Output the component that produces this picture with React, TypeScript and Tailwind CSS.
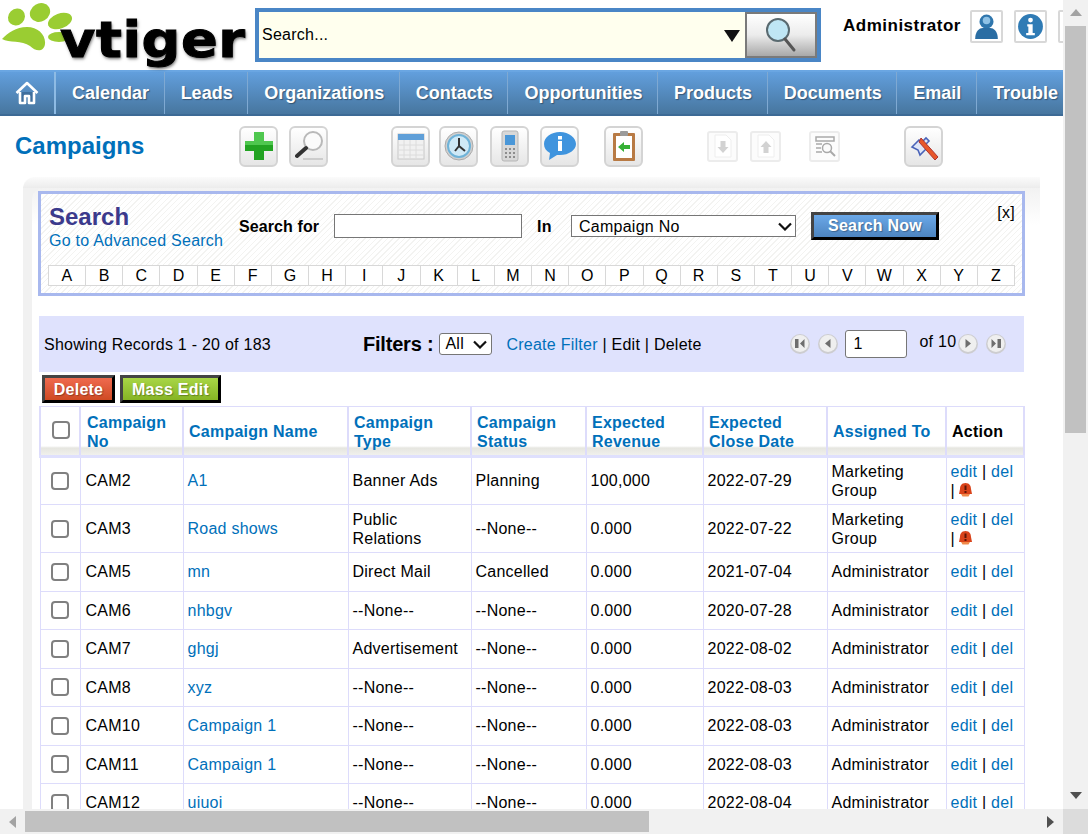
import React from 'react';

const navItems = ['Calendar', 'Leads', 'Organizations', 'Contacts', 'Opportunities', 'Products', 'Documents', 'Email', 'Trouble'];
const letters = 'ABCDEFGHIJKLMNOPQRSTUVWXYZ'.split('');

const rows = [
  ['CAM2', 'A1', 'Banner Ads', 'Planning', '100,000', '2022-07-29', 'Marketing Group', true],
  ['CAM3', 'Road shows', 'Public Relations', '--None--', '0.000', '2022-07-22', 'Marketing Group', true],
  ['CAM5', 'mn', 'Direct Mail', 'Cancelled', '0.000', '2021-07-04', 'Administrator', false],
  ['CAM6', 'nhbgv', '--None--', '--None--', '0.000', '2020-07-28', 'Administrator', false],
  ['CAM7', 'ghgj', 'Advertisement', '--None--', '0.000', '2022-08-02', 'Administrator', false],
  ['CAM8', 'xyz', '--None--', '--None--', '0.000', '2022-08-03', 'Administrator', false],
  ['CAM10', 'Campaign 1', '--None--', '--None--', '0.000', '2022-08-03', 'Administrator', false],
  ['CAM11', 'Campaign 1', '--None--', '--None--', '0.000', '2022-08-03', 'Administrator', false],
  ['CAM12', 'uiuoi', '--None--', '--None--', '0.000', '2022-08-04', 'Administrator', false],
] as const;

const headers = [
  ['Campaign', 'No'],
  ['Campaign Name'],
  ['Campaign', 'Type'],
  ['Campaign', 'Status'],
  ['Expected', 'Revenue'],
  ['Expected', 'Close Date'],
  ['Assigned To'],
];

const Logo = () => (
  <div className="relative w-[255px] h-[70px] shrink-0">
    <svg className="absolute left-0 top-0 blur-[0.4px]" width="80" height="56" viewBox="0 0 80 56">
      <g fill="#9acd32">
        <ellipse cx="16.5" cy="17" rx="9" ry="8" transform="rotate(-45 16.5 17)" />
        <ellipse cx="40" cy="12.5" rx="10.5" ry="9" transform="rotate(-30 40 12.5)" />
        <ellipse cx="60" cy="21" rx="12.5" ry="7.5" transform="rotate(-20 60 21)" />
        <path d="M2 39 C8 33 16 27 27 27 C38 27 46 35 45 44 C44 52 36 52 30 46 C22 40 9 43 2 39Z" />
        <ellipse cx="59" cy="37" rx="11" ry="5" />
      </g>
    </svg>
    <span className="absolute left-[60px] top-[10px] origin-left scale-x-[1.085] text-[50px] leading-[60px] font-bold font-['DejaVu_Sans',sans-serif] tracking-[0.5px] text-black [-webkit-text-stroke:1px_black] [text-shadow:1px_2px_3px_rgba(0,0,0,0.55)]">
      vtiger
    </span>
  </div>
);

const HeaderIcon = ({ children }: { children: React.ReactNode }) => (
  <div className="w-[33px] h-[33px] shrink-0 border-2 border-[#d8d8d8] rounded-[2px] bg-white flex items-center justify-center">
    {children}
  </div>
);

const ToolBtn = ({ children, className = '' }: { children: React.ReactNode; className?: string }) => (
  <div className={`w-[39px] h-[41px] shrink-0 rounded-[6px] border-2 border-[#d4d4d4] bg-gradient-to-b from-white to-[#e6e6e6] flex items-center justify-center [&>svg]:blur-[0.4px] ${className}`}>
    {children}
  </div>
);

const FadedBtn = ({ children, className = '' }: { children: React.ReactNode; className?: string }) => (
  <div className={`w-[31px] h-[31px] shrink-0 rounded-[3px] border-2 border-[#ececec] bg-[#fcfcfc] flex items-center justify-center [&>svg]:blur-[0.3px] ${className}`}>
    {children}
  </div>
);

const PageBtn = ({ dir, className = '' }: { dir: 'first' | 'prev' | 'next' | 'last'; className?: string }) => (
  <svg className={`shrink-0 ${className}`} width="20" height="20" viewBox="0 0 20 20">
    <circle cx="10" cy="10" r="10" fill="#cdcdd0" />
    <circle cx="10" cy="9.5" r="8.5" fill="#efefef" />
    {dir === 'first' && <path d="M5 5h3.5v9H5zM10 9.5L14.5 5v9z" fill="#6e6e6e" />}
    {dir === 'prev' && <path d="M12.5 5v9l-5.5-4.5z" fill="#6e6e6e" />}
    {dir === 'next' && <path d="M7.5 5v9l5.5-4.5z" fill="#6e6e6e" />}
    {dir === 'last' && <path d="M5.5 5v9l4.5-4.5zM11.5 5H15v9h-3.5z" fill="#6e6e6e" />}
  </svg>
);

const AlertIcon = () => (
  <svg className="inline-block align-[-1px] ml-[3px]" width="15" height="15" viewBox="0 0 15 15">
    <path d="M7.5 1C3.5 1 2 4 2 7L1 12h13l-1-5c0-3-1.5-6-5.5-6Z" fill="#d9431a" />
    <path d="M3 12h9l-1.5 2.5h-6z" fill="#f08a4a" />
    <rect x="6.5" y="3.5" width="2" height="4.5" fill="#5c1606" />
    <rect x="6.5" y="9" width="2" height="2" fill="#5c1606" />
  </svg>
);

const Chevron = () => (
  <svg className="shrink-0" width="14" height="9" viewBox="0 0 14 9" fill="none" stroke="#111" strokeWidth="2.2">
    <path d="M1 1.5l6 6 6-6" />
  </svg>
);

const Check = () => (
  <input
    type="checkbox"
    className="block appearance-none w-[18px] h-[18px] bg-white border-2 border-[#808080] rounded-[4px]"
  />
);

export default function App() {
  return (
    <div className="w-[1088px] h-[834px] overflow-hidden flex flex-col bg-white font-['Liberation_Sans',Arial,sans-serif] text-[16px] tracking-[0.25px] text-black">
      <div className="flex h-[809px]">
        <div className="w-[1063px] overflow-hidden shrink-0">
          {/* Top header */}
          <div className="flex h-[70px]">
            <Logo />
            <div className="w-[566px] h-[54px] mt-2 shrink-0 border-4 border-[#4a86c6] bg-[#ffffee] flex items-center pl-[3px]">
              <span className="flex-1">Search...</span>
              <svg className="mr-[5px] mt-[2px]" width="16" height="12" viewBox="0 0 16 12">
                <path d="M0 0h16L8 12z" fill="#111" />
              </svg>
              <div className="w-[72px] h-[46px] border-2 border-[#7a7a7a] bg-gradient-to-b from-white via-[#ececec] to-[#a9a9a9] flex items-center justify-center">
                <svg width="32" height="38" viewBox="0 0 32 38">
                  <circle cx="13" cy="14" r="11" fill="#bfe6f4" stroke="#5a6a70" strokeWidth="2" />
                  <path d="M20 23l9 11" stroke="#555" strokeWidth="3" strokeLinecap="round" />
                </svg>
              </div>
            </div>
            <div className="flex pt-[10px] pl-[22px] gap-[11px]">
              <span className="font-bold text-[17px] leading-[20px] tracking-[0.5px] mr-[-2px] mt-[6px] whitespace-nowrap">Administrator</span>
              <HeaderIcon>
                <svg width="27" height="27" viewBox="0 0 25 25">
                  <circle cx="12.5" cy="8" r="6.5" fill="#2f76ad" />
                  <circle cx="12.5" cy="7" r="3.5" fill="#8fc2e6" />
                  <path d="M2 24c0-7 4-10 7-10h7c3 0 7 3 7 10z" fill="#2a6da3" />
                </svg>
              </HeaderIcon>
              <HeaderIcon>
                <svg width="27" height="27" viewBox="0 0 25 25">
                  <circle cx="12.5" cy="12.5" r="11.5" fill="#2f7bb5" />
                  <circle cx="12.5" cy="6.5" r="2.2" fill="#fff" />
                  <path d="M9.5 10.5h5v8h2v2h-8v-2h2v-6h-1z" fill="#fff" />
                </svg>
              </HeaderIcon>
              <HeaderIcon>
                <div className="w-2 h-2 bg-[#999]" />
              </HeaderIcon>
            </div>
          </div>

          {/* Nav bar */}
          <div className="flex h-[46px] border-t-2 border-[#6aa6e2] border-b-2 border-b-[#3d6a95] bg-gradient-to-b from-[#629fdd] to-[#47769f] text-white font-bold text-[18px] tracking-normal [text-shadow:1px_1px_1px_rgba(0,0,0,0.35)] whitespace-nowrap">
            <div className="w-[56px] shrink-0 flex items-center justify-center border-r-2 border-r-[#8ebbe4]">
              <svg width="24" height="26" viewBox="0 0 24 26" fill="none" stroke="#fff" strokeWidth="2.6" strokeLinejoin="round">
                <path d="M1.5 13L12 3l10.5 10" />
                <path d="M5 12v11h5v-7h4v7h5V12" fill="#3f6f9e" />
              </svg>
            </div>
            {navItems.map((n) => (
              <div key={n} className="pl-4 pr-[14.6px] flex items-center border-r border-r-[#7fa9d2] last:border-r-0">
                {n}
              </div>
            ))}
          </div>

          {/* Title and tool buttons */}
          <div className="flex items-center h-[61px] pl-[15px] pb-[1px]">
            <span className="w-[224px] shrink-0 font-bold text-[24px] tracking-normal text-[#0070ba]">Campaigns</span>
            <ToolBtn>
              <svg width="32" height="32" viewBox="0 0 32 32">
                <path d="M11 2h10v9h9v10h-9v9H11v-9H2V11h9z" fill="#22a322" />
                <path d="M11 2h10v9h9v4H2v-4h9z" fill="#4fc74f" />
              </svg>
            </ToolBtn>
            <ToolBtn className="ml-[11px]">
              <svg width="32" height="32" viewBox="0 0 32 32">
                <circle cx="20" cy="11" r="9" fill="#fbfbfb" stroke="#b9b9b9" strokeWidth="2" />
                <path d="M13 18L4 26" stroke="#333" strokeWidth="4" strokeLinecap="round" />
                <path d="M10 29h20" stroke="#ccc" strokeWidth="2" />
              </svg>
            </ToolBtn>
            <ToolBtn className="ml-[63px]">
              <svg width="30" height="30" viewBox="0 0 30 30">
                <rect x="2" y="3" width="26" height="25" fill="#f1f1f1" stroke="#c8c8c8" />
                <rect x="2" y="3" width="26" height="6" fill="#5f9fd8" />
                <path d="M2 14h26M2 19h26M2 24h26M8 9v19M14 9v19M20 9v19" stroke="#dcdcdc" />
              </svg>
            </ToolBtn>
            <ToolBtn className="ml-[9px]">
              <svg width="32" height="32" viewBox="0 0 32 32">
                <circle cx="16" cy="16" r="14" fill="#d0d0d0" stroke="#aaa" />
                <circle cx="16" cy="16" r="11" fill="#cfe9f6" stroke="#6fb3d8" strokeWidth="2" />
                <path d="M16 8v8l6 5M16 16l-4 5" stroke="#333" strokeWidth="2" fill="none" />
              </svg>
            </ToolBtn>
            <ToolBtn className="ml-[12px]">
              <svg width="20" height="32" viewBox="0 0 20 32">
                <rect x="2" y="1" width="16" height="30" rx="2" fill="#d8d8d8" stroke="#b5b5b5" />
                <rect x="5" y="5" width="10" height="10" fill="#4a97d8" />
                <path d="M5 19h10M5 23h10M5 27h10" stroke="#8d8d8d" strokeWidth="2" strokeDasharray="2 2" />
              </svg>
            </ToolBtn>
            <ToolBtn className="ml-[11px]">
              <svg width="34" height="30" viewBox="0 0 34 30">
                <path d="M17 1C8 1 1 6 1 13c0 4 2 7 6 9l-1 7 8-5c1 0 2 0 3 0 9 0 16-5 16-11S26 1 17 1Z" fill="#3f94de" />
                <rect x="15" y="10" width="4" height="10" fill="#fff" />
                <rect x="15" y="5" width="4" height="3.5" fill="#fff" />
              </svg>
            </ToolBtn>
            <ToolBtn className="ml-[25px]">
              <svg width="24" height="32" viewBox="0 0 24 32">
                <rect x="1" y="3" width="22" height="28" rx="1" fill="#b87a44" />
                <rect x="4" y="6" width="16" height="22" fill="#fff" />
                <rect x="8" y="1" width="8" height="5" rx="1" fill="#9b9b9b" />
                <path d="M6 17l6-5v3h6v4h-6v3z" fill="#35b035" />
              </svg>
            </ToolBtn>
            <FadedBtn className="ml-[64px]">
              <svg width="20" height="24" viewBox="0 0 20 24">
                <path d="M2 1h11l5 5v17H2z" fill="#fff" stroke="#eeeeee" />
                <path d="M7.5 7h5v6h3l-5.5 6-5.5-6h3z" fill="#d2d2d2" />
              </svg>
            </FadedBtn>
            <FadedBtn className="ml-[12px]">
              <svg width="20" height="24" viewBox="0 0 20 24">
                <path d="M2 1h11l5 5v17H2z" fill="#fff" stroke="#eeeeee" />
                <path d="M7.5 19h5v-6h3L10 7l-5.5 6h3z" fill="#d2d2d2" />
              </svg>
            </FadedBtn>
            <FadedBtn className="ml-[28px] border-[#dadada]">
              <svg width="24" height="24" viewBox="0 0 24 24" fill="none" stroke="#a9a9a9">
                <path d="M3 3h18v4H3zM3 10h6M3 14h5M3 18h6" strokeWidth="1.5" />
                <circle cx="14" cy="14" r="4.5" strokeWidth="1.5" />
                <path d="M17 17l5 5" strokeWidth="2" />
              </svg>
            </FadedBtn>
            <ToolBtn className="ml-[64px]">
              <svg width="32" height="32" viewBox="0 0 32 32">
                <path d="M4 17l7-7 3 2 4-4 3 3-4 4 2 3-7 7-2-5z" fill="#dfe6f7" stroke="#4a63b8" strokeWidth="1.6" />
                <path d="M13 8l17 19-3 3L11 12z" fill="#e8572a" stroke="#a33" />
              </svg>
            </ToolBtn>
          </div>

          {/* Main panel with soft edge */}
          <div className="ml-[23px] w-[1017px] pl-[9px] pt-[11px] rounded-tl-[12px] bg-[#f1f1f1] bg-gradient-to-b from-[#fbfbfb] to-[#ececec] bg-[length:100%_11px] bg-no-repeat">
            <div className="rounded-tl-[10px] bg-white bg-gradient-to-b from-[#f2f2f2] to-white bg-[length:100%_37px] bg-no-repeat pt-[3px] pl-[7px] pr-[16px]">
              {/* Search box */}
              <div className="relative h-[105px] -mx-[1px] border-[3px] border-[#a8b8ee] bg-[repeating-linear-gradient(135deg,#f3f3f1_0px,#f3f3f1_1px,#ffffff_1px,#ffffff_4px)] px-[7px]">
                <div className="flex h-[71px]">
                  <div className="w-[191px] pt-[9px] pl-[1px] shrink-0">
                    <div className="font-bold text-[24px] leading-[27px] tracking-normal text-[#3b3a8c]">Search</div>
                    <div className="text-[#0070ba] leading-[20px] pt-[1px] whitespace-nowrap">Go to Advanced Search</div>
                  </div>
                  <span className="font-bold tracking-[0.1px] mt-[21px] w-[95px] shrink-0 whitespace-nowrap">Search for</span>
                  <input className="w-[188px] h-[24px] mt-[20px] shrink-0 bg-white border border-[#767676]" />
                  <span className="font-bold mt-[21px] ml-[15px] w-[34px] shrink-0">In</span>
                  <div className="w-[225px] h-[22px] mt-[21px] pt-[1px] shrink-0 bg-white border border-[#767676] pl-[7px] pr-[3px] flex items-center justify-between">
                    Campaign No
                    <Chevron />
                  </div>
                  <div className="w-[128px] h-[28px] mt-[18px] ml-[15px] shrink-0 border-[3px] border-black border-t-[#444] border-l-[#444] bg-gradient-to-b from-[#6ba8e8] to-[#4d85c0] flex items-center justify-center text-white font-bold [text-shadow:1px_1px_1px_rgba(0,0,0,0.3)]">
                    Search Now
                  </div>
                </div>
                <span className="absolute right-[7px] top-[7px]">[x]</span>
                <div className="flex h-[21px] border border-[#d8d8d8] bg-white">
                  {letters.map((l) => (
                    <div key={l} className="flex-1 flex items-center justify-center border-l border-l-[#d8d8d8] first:border-l-0">
                      {l}
                    </div>
                  ))}
                </div>
              </div>

              {/* Filters row */}
              <div className="flex items-center h-[56px] mt-[20px] pl-[5px] bg-[#dfe2fd] whitespace-nowrap">
                <span className="w-[319px] shrink-0 pt-[1px]">Showing Records 1 - 20 of 183</span>
                <span className="font-bold text-[20px] tracking-[-0.2px] mr-[6px]">Filters :</span>
                <div className="w-[53px] h-[22px] border border-[#767676] rounded-[3px] bg-white pl-[5px] pr-[4px] flex items-center justify-between">
                  All
                  <Chevron />
                </div>
                <span className="ml-[14px] w-[284px] shrink-0 pt-[1px]">
                  <span className="text-[#0070ba]">Create Filter</span> | Edit | Delete
                </span>
                <PageBtn dir="first" />
                <PageBtn dir="prev" className="ml-[8px]" />
                <input defaultValue="1" className="w-[62px] h-[28px] ml-[7px] pl-[7px] shrink-0 bg-white border border-[#767676] rounded-[3px]" />
                <span className="ml-[12px] mt-[-4px]">of 10</span>
                <PageBtn dir="next" className="ml-[2px]" />
                <PageBtn dir="last" className="ml-[8px]" />
              </div>

              {/* Action buttons */}
              <div className="flex gap-[5px] h-[34px] pl-[3px] pt-[3px]">
                <div className="w-[73px] h-[28px] pt-[1px] border-[3px] border-black border-t-[#444] border-l-[#444] bg-gradient-to-b from-[#ef6a4e] to-[#cf4a22] flex items-center justify-center text-white font-bold [text-shadow:1px_1px_1px_rgba(0,0,0,0.3)]">
                  Delete
                </div>
                <div className="w-[101px] h-[28px] pt-[1px] border-[3px] border-black border-t-[#444] border-l-[#444] bg-gradient-to-b from-[#a8d646] to-[#86b424] flex items-center justify-center text-white font-bold [text-shadow:1px_1px_1px_rgba(0,0,0,0.3)]">
                  Mass Edit
                </div>
              </div>

              {/* Campaign list */}
              <table className="table-fixed border-collapse w-[984px]">
                <colgroup>
                  <col className="w-[40px]" />
                  <col className="w-[103px]" />
                  <col className="w-[165px]" />
                  <col className="w-[123px]" />
                  <col className="w-[115px]" />
                  <col className="w-[117px]" />
                  <col className="w-[124px]" />
                  <col className="w-[119px]" />
                  <col className="w-[78px]" />
                </colgroup>
                <thead>
                  <tr className="h-[50px] bg-[linear-gradient(to_bottom,#ffffff_0px,#ffffff_39px,#e6e6e0_41px,#f2f2ee_49px)]">
                    <th className="border border-x-2 border-[#dddcfb] border-b-[3px] border-b-[#dfe0fd] pl-[11px] pb-[3px]">
                      <Check />
                    </th>
                    {headers.map((h, idx) => (
                      <th key={h[0] + h.length + h[h.length - 1]} className={`border border-x-2 border-[#dddcfb] border-b-[3px] border-b-[#dfe0fd] ${idx === 0 ? 'pl-[6px]' : 'pl-[5px]'} pr-[5px] pt-[1px] text-left font-bold text-[#0070ba] leading-[19px]`}>
                        {h.map((t) => (
                          <div key={t}>{t}</div>
                        ))}
                      </th>
                    ))}
                    <th className="border border-x-2 border-[#dddcfb] border-b-[3px] border-b-[#dfe0fd] px-[5px] pt-[1px] text-left font-bold">
                      Action
                    </th>
                  </tr>
                </thead>
                <tbody>
                  {rows.map((r, i) => {
                    const tall = r[7];
                    const cell = `border border-[#dddcfb] px-[4px] leading-[19px] ${i === 0 ? 'pb-[1px]' : ''}`;
                    return (
                      <tr key={i} className={tall ? 'h-[48px]' : 'h-[38.5px]'}>
                        <td className="border border-[#dddcfb] pl-[10px]"><Check /></td>
                        <td className={`${cell} !pl-[5px]`}>{r[0]}</td>
                        <td className={`${cell} text-[#0070ba]`}>{r[1]}</td>
                        <td className={cell}>{r[2]}</td>
                        <td className={cell}>{r[3]}</td>
                        <td className={cell}>{r[4]}</td>
                        <td className={cell}>{r[5]}</td>
                        <td className={cell}>{r[6]}</td>
                        <td className={cell}>
                          <span className="text-[#0070ba]">edit</span> | <span className="text-[#0070ba]">del</span>
                          {tall && (
                            <>
                              <br />
                              |
                              <AlertIcon />
                            </>
                          )}
                        </td>
                      </tr>
                    );
                  })}
                </tbody>
              </table>
            </div>
          </div>
        </div>

        {/* Vertical scrollbar */}
        <div className="w-[25px] shrink-0 bg-[#f1f1f1] flex flex-col items-center">
          <svg className="mt-[9px] shrink-0" width="12" height="7" viewBox="0 0 12 7"><path d="M6 0l6 7H0z" fill="#a3a3a3" /></svg>
          <div className="w-[21px] h-[407px] mt-[10px] bg-[#c1c1c1] shrink-0" />
          <svg className="mt-[359px] shrink-0" width="12" height="7" viewBox="0 0 12 7"><path d="M6 7L0 0h12z" fill="#505050" /></svg>
        </div>
      </div>

      {/* Horizontal scrollbar */}
      <div className="flex h-[25px]">
        <div className="w-[1063px] bg-[#f1f1f1] flex items-center">
          <svg className="ml-[9px] shrink-0" width="7" height="12" viewBox="0 0 7 12"><path d="M0 6l7-6v12z" fill="#a3a3a3" /></svg>
          <div className="w-[624px] h-[21px] ml-[9px] bg-[#c1c1c1] shrink-0" />
          <svg className="ml-[398px] shrink-0" width="7" height="12" viewBox="0 0 7 12"><path d="M7 6L0 0v12z" fill="#505050" /></svg>
        </div>
        <div className="w-[25px] bg-[#dcdcdc]" />
      </div>
    </div>
  );
}
